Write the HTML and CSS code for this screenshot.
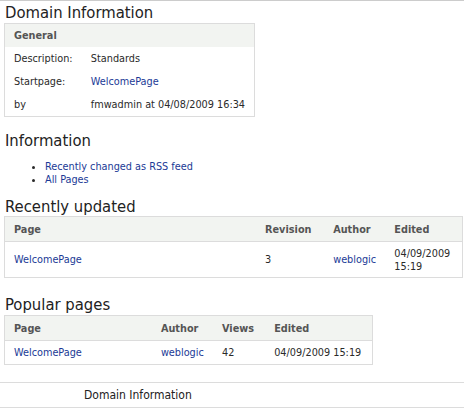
FILE: index.html
```html
<!DOCTYPE html>
<html>
<head>
<meta charset="utf-8">
<link rel="stylesheet" href="styles.css">
</head>
<body>
<div class="page">
  <h1 class="heading first">Domain Information</h1>
  <table class="grid info">
    <colgroup>
      <col class="c-label"><col class="c-value">
    </colgroup>
    <thead>
      <tr><th colspan="2">General</th></tr>
    </thead>
    <tbody>
      <tr><td>Description:</td><td>Standards</td></tr>
      <tr><td>Startpage:</td><td><a href="#">WelcomePage</a></td></tr>
      <tr><td>by</td><td>fmwadmin at 04/08/2009 16:34</td></tr>
    </tbody>
  </table>

  <h2 class="heading info-head">Information</h2>
  <ul class="links">
    <li><a href="#">Recently changed as RSS feed</a></li>
    <li><a href="#">All Pages</a></li>
  </ul>

  <h2 class="heading recent-head">Recently updated</h2>
  <table class="grid recent">
    <colgroup>
      <col class="c-page1"><col class="c-rev"><col class="c-auth1"><col class="c-edit1">
    </colgroup>
    <thead>
      <tr><th>Page</th><th>Revision</th><th>Author</th><th>Edited</th></tr>
    </thead>
    <tbody>
      <tr class="tall"><td><a href="#">WelcomePage</a></td><td>3</td><td><a href="#">weblogic</a></td><td>04/09/2009<br>15:19</td></tr>
    </tbody>
  </table>

  <h2 class="heading popular-head">Popular pages</h2>
  <table class="grid popular">
    <colgroup>
      <col class="c-page2"><col class="c-auth2"><col class="c-views"><col class="c-edit2">
    </colgroup>
    <thead>
      <tr><th>Page</th><th>Author</th><th>Views</th><th>Edited</th></tr>
    </thead>
    <tbody>
      <tr><td><a href="#">WelcomePage</a></td><td><a href="#">weblogic</a></td><td>42</td><td>04/09/2009 15:19</td></tr>
    </tbody>
  </table>

  <div class="footer"><span>Domain Information</span></div>
</div>
</body>
</html>
```

FILE: styles.css
```css
html, body {
  margin: 0;
  padding: 0;
  background: #fff;
}
body {
  font-family: "DejaVu Sans Condensed", "DejaVu Sans", sans-serif;
  font-size: 10.8px;
  color: #2a2a2a;
  border-top: 1px solid #cccccc;
}
a {
  color: #1b3a96;
  text-decoration: none;
}
.heading {
  margin: 0;
  padding-left: 5px;
  font-size: 16.5px;
  font-weight: normal;
  line-height: 27px;
  height: 22px;
  color: #222;
}
.heading.first { line-height: 24px; }
.info-head { margin-top: 10px; }
.recent-head { margin-top: 7px; }
.popular-head { margin-top: 13px; }

.grid {
  margin-left: 4px;
  border-collapse: collapse;
  border: 1px solid #dcdcdc;
  table-layout: fixed;
}
.grid th {
  background: #f2f4f1;
  color: #555;
  font-weight: bold;
  text-align: left;
  height: 24px;
  padding: 0 9px;
  vertical-align: middle;
  border-bottom: 1px solid #dcdcdc;
}
.grid td {
  height: 23px;
  padding: 0 9px;
  vertical-align: middle;
  line-height: 13px;
  white-space: nowrap;
}
.info {
  width: 251px;
}
.info th { border-bottom: none; height: 23px; }
.c-label { width: 77px; }
.c-value { width: 172px; }

.links {
  margin: 11px 0 0 0;
  padding: 0 0 0 45px;
  line-height: 13px;
}
.links li { list-style: disc; }

.recent { width: 459px; margin-top: 1px; }
.recent .tall td { height: 35px; }
.c-page1 { width: 251px; }
.c-rev { width: 68px; }
.c-auth1 { width: 61px; }
.c-edit1 { width: 77px; }

.popular { width: 369px; margin-top: 2px; }
.c-page2 { width: 147px; }
.c-auth2 { width: 61px; }
.c-views { width: 52px; }
.c-edit2 { width: 107px; }

.footer {
  margin-top: 17px;
  border-top: 1px solid #dcdcdc;
  border-bottom: 1px solid #dcdcdc;
  height: 24px;
  line-height: 24px;
  padding-left: 84px;
  font-size: 12px;
  color: #222;
}
```
